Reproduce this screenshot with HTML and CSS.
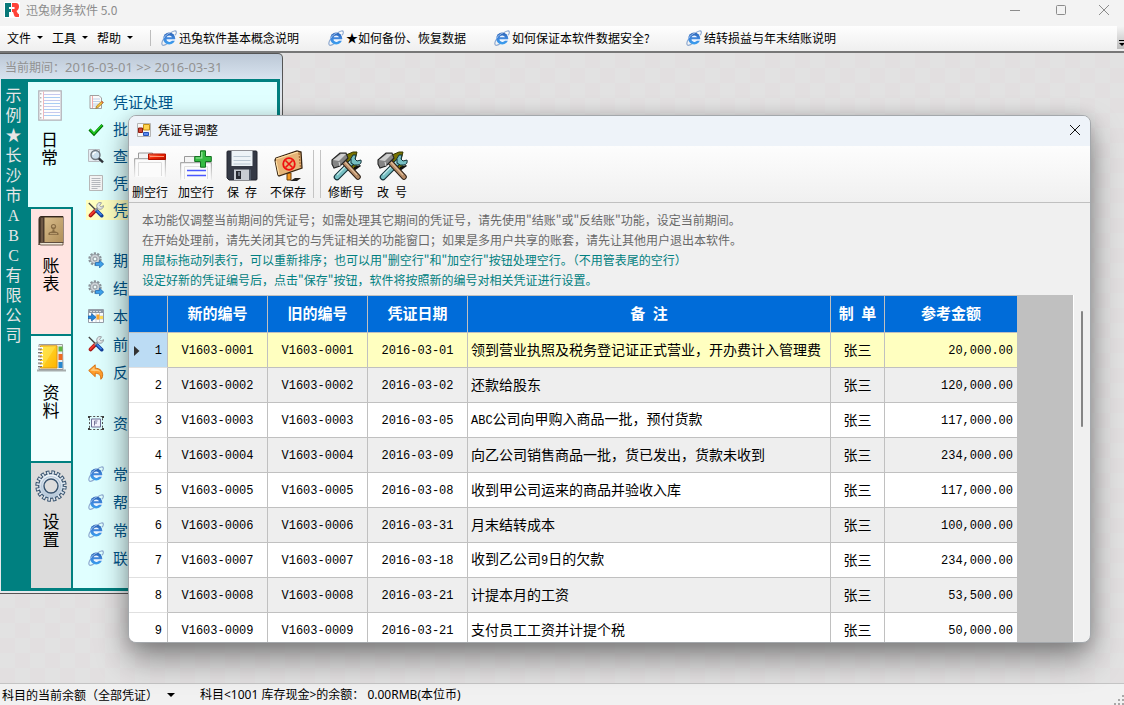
FILE: index.html
```html
<!DOCTYPE html>
<html lang="zh-CN">
<head>
<meta charset="utf-8">
<title>迅兔财务软件 5.0</title>
<meta name="viewport" content="width=device-width, initial-scale=1">
<link rel="stylesheet" href="styles.css">
</head>
<body>
<svg class="sprite" aria-hidden="true">
  <defs>
    <linearGradient id="g-ie" x1="0" y1="0" x2="0" y2="1"><stop offset="0" stop-color="#2a62b4"/><stop offset=".5" stop-color="#3f86dc"/><stop offset="1" stop-color="#3aa0f0"/></linearGradient>
    <linearGradient id="g-leather" x1="0" y1="0" x2="1" y2="1"><stop offset="0" stop-color="#d9bd8b"/><stop offset="1" stop-color="#b08f5a"/></linearGradient>
    <linearGradient id="g-yellow" x1="0" y1="0" x2="1" y2="1"><stop offset="0" stop-color="#ffe23a"/><stop offset="1" stop-color="#ffb400"/></linearGradient>
    <linearGradient id="g-fade" x1="0" y1="0" x2="0" y2="1"><stop offset="0" stop-color="#aaa"/><stop offset="1" stop-color="#eee"/></linearGradient>
    <linearGradient id="g-red" x1="0" y1="0" x2="1" y2="1"><stop offset="0" stop-color="#ff8a66"/><stop offset=".5" stop-color="#ee2200"/><stop offset="1" stop-color="#b01000"/></linearGradient>
    <linearGradient id="g-steel" x1="0" y1="0" x2="0" y2="1"><stop offset="0" stop-color="#f4f8fc"/><stop offset="1" stop-color="#b4c6d8"/></linearGradient>
  </defs>
  <symbol id="i-ie" viewBox="0 0 16 16">
    <path d="M9.500 3C12.500.6 15 .4 15.300 1.800c.2 1-.3 2.300-1 3.400" fill="none" stroke="#8ea9d0" stroke-width="1.100"/>
    <path d="M2.600 9C.6 12 .3 14.500 1.700 15.200c1.100.4 2.800-.4 4.600-1.700" fill="none" stroke="#8ea9d0" stroke-width="1.200"/>
    <circle cx="8.200" cy="8.400" r="6" fill="url(#g-ie)"/>
    <path d="M5.500 7.200a2.900 2.500 0 0 1 5.500 0z" fill="#eef5ff"/>
    <path d="M5.500 9.300h9v1.500h-3.500a3 2.300 0 0 1-5.500-1.500z" fill="#eef5ff"/>
    <path d="M2.500 8.500C4.300 5.500 6.800 3.500 9.500 2.600" fill="none" stroke="#b4cdf0" stroke-width=".9"/>
  </symbol>
  <symbol id="i-logo" viewBox="0 0 16 16">
    <path d="M0 0h16v16H0z" fill="#fff"/>
    <path d="M1 1h6v4H5v2h2v3H5v5H1z" fill="#087878"/>
    <path d="M8 1h4c2 0 3 1.500 3 3.500S14 8 12.500 9c1 1 1 3 2.500 3v3h-3c-2 0-2-3-3-5H8V7h2.500V5H8z" fill="#ff4338"/>
  </symbol>
  <symbol id="i-form" viewBox="0 0 14 14">
    <path d="M.5 .5h13v13H.5z" fill="#f7f7f7" stroke="#b5b5b5"/>
    <path d="M6.500 1.500h6v5.500h-6z" fill="#ffd451" stroke="#c29016"/>
    <path d="M1.500 5h4v4.500h-4z" fill="#d34836" stroke="#8c1b10"/>
    <path d="M6.500 9.500h5v3h-5z" fill="#5b8bf0" stroke="#2753b8"/>
  </symbol>
  <symbol id="i-write" viewBox="0 0 16 16">
    <path d="M2 1.500h9l2.500 2.500v10.500H2z" fill="#fbfbfb" stroke="#a0a0a0"/>
    <path d="M4.500 2v12" stroke="#f3a8a8"/><path d="M5 5h7M5 7.500h7M5 10h5M5 12h4" stroke="#bcd0e8"/>
    <path d="M13.800 7l1.600 1.600-5.400 5-2.200.8.700-2.300z" fill="#f5c238" stroke="#936b24" stroke-width=".7"/>
    <path d="M13.800 7l1.600 1.600-.8.800L13 7.800z" fill="#d0604a"/>
  </symbol>
  <symbol id="i-check" viewBox="0 0 16 16">
    <path d="M1.500 8.500l4.500 4.800L14.500 4" fill="none" stroke="#006f00" stroke-width="2.800"/>
    <path d="M1.800 8.200l4.200 4.300L14 4" fill="none" stroke="#22cf22" stroke-width="1.300"/>
  </symbol>
  <symbol id="i-search" viewBox="0 0 16 16">
    <path d="M.5 1.500h11v12H.5z" fill="#e7edf3" stroke="#b9bdc2"/>
    <circle cx="7.500" cy="7" r="4.500" fill="#cde0ee" stroke="#70777f" stroke-width="1.400"/>
    <path d="M5 7a2.500 2.500 0 0 1 3-2.600" fill="none" stroke="#fff" stroke-width="1.200"/>
    <path d="M10.800 10.300l4.200 4" stroke="#30343a" stroke-width="2.400"/>
  </symbol>
  <symbol id="i-doc" viewBox="0 0 16 16">
    <path d="M1.500 .5h13v15h-13z" fill="#f4f4f4" stroke="#b8b8b8"/>
    <path d="M3.500 3.500h9M3.500 5.500h9M3.500 7.500h9M3.500 9.500h9M3.500 11.500h9M3.500 13.500h6" stroke="#b6b9be"/>
  </symbol>
  <symbol id="i-tools" viewBox="0 0 16 16">
    <path d="M.8 1l6.500 6.500" stroke="#444" stroke-width="1.300"/>
    <path d="M7.300 8.700L2.600 13.400" stroke="#a51212" stroke-width="3.800" stroke-linecap="round"/>
    <path d="M7 8.500L2.400 13" stroke="#f03a2e" stroke-width="1.800" stroke-linecap="round"/>
    <path d="M8.700 8.700l5 5" stroke="#123f99" stroke-width="3.600" stroke-linecap="round"/>
    <path d="M9 8.600l4.500 4.500" stroke="#3d86ec" stroke-width="1.600"/>
    <path d="M6.800 8.800L11 4.600" stroke="#8b9096" stroke-width="2"/>
    <path d="M13.500 .8a3.400 3.400 0 1 0 2 2.800L13.200 5 11.700 3.500z" fill="#e6e9ec" stroke="#8b9096" stroke-width=".8"/>
  </symbol>
  <symbol id="i-gear" viewBox="0 0 16 16">
    <circle cx="7" cy="7" r="5.600" fill="none" stroke="#8c949b" stroke-width="2.200" stroke-dasharray="2.200 1.300"/>
    <circle cx="7" cy="7" r="4.700" fill="#cbd0d5" stroke="#8c949b" stroke-width=".8"/>
    <circle cx="7" cy="7" r="2" fill="#eefcfc" stroke="#8c949b"/>
    <path d="M7.500 10.500h4V8.300l4.200 3.800-4.200 3.800v-2.300h-4z" fill="#3ea2ec" stroke="#1d66b0" stroke-width=".7"/>
  </symbol>
  <symbol id="i-calendar" viewBox="0 0 16 16">
    <path d="M.5 1.500h15v13H.5z" fill="#fff" stroke="#98a0aa"/><path d="M1 2h14v3H1z" fill="#8f9aa6"/>
    <path d="M2 3.500h12" stroke="#d9dde2" stroke-dasharray="2 1"/>
    <path d="M1 8h14M1 11h14M4.500 5v9M8 5v9M11.500 5v9" stroke="#c9d2dd"/>
    <path d="M8.500 6.500h3v5h-3z" fill="#ffa629"/><path d="M12 8h3v3h-3z" fill="#ffdc56"/>
    <path d="M0 8h3.500V5.500L8 9.300 3.500 13v-2.500H0z" fill="#2386dc" stroke="#14549c" stroke-width=".6"/>
  </symbol>
  <symbol id="i-undo" viewBox="0 0 16 16">
    <path d="M.7 6.500L7.200 .8v3.400c5 0 8.300 3.500 7.300 8.300-.2 1.400-.9 2.300-1.700 2.800.2-4-1.600-6-5.600-6v3.400z" fill="#ff9d2b" stroke="#d56b08" stroke-width=".9"/>
    <path d="M2.300 6.500L6.500 2.800v2.400c3 0 5 .9 6 2.600-2-1-4-1-6-.6z" fill="#ffca78"/>
  </symbol>
  <symbol id="i-asset" viewBox="0 0 16 16">
    <path d="M1.500 1.500h13v13h-13z" fill="none" stroke="#505050" stroke-dasharray="2 1.700"/>
    <path d="M3.500 4h9v8h-9z" fill="#f3f4ff" stroke="#6c6c94"/>
    <path d="M6.500 10.500V6H9.500M6.500 8H9" fill="none" stroke="#77779a"/>
    <path d="M0 1h2v2H0zM14 1h2v2h-2zM0 13h2v2H0zM14 13h2v2h-2z" fill="#404040"/>
  </symbol>
  <symbol id="i-page" viewBox="0 0 24 32">
    <path d="M.8 .8h22.400v29.400H.8z" fill="#fdfdfd" stroke="#b1b1b8" stroke-width="1.300"/>
    <path d="M5.500 1.500v28" stroke="#eeb7bd"/>
    <path d="M2.800 3v26" stroke="#999" stroke-dasharray="1.500 2.500"/>
    <path d="M6 4.500h16M6 10.500h16M6 16.500h16M6 22.500h16" stroke="#c5c9ee"/>
    <path d="M6 7.500h16M6 13.500h16M6 19.500h16M6 25.500h16" stroke="#a9cdf3"/>
  </symbol>
  <symbol id="i-book" viewBox="0 0 26 30">
    <path d="M1 3Q1 .5 3 .5h22v26.500H4Q1 27 1 29z" fill="#4b3a2c" stroke="#35281d"/>
    <path d="M6.500 1.500h18.500V26H6.500z" fill="url(#g-leather)"/>
    <path d="M1.500 27.500Q2 26.500 4 26.500h21v2.500H3Q1.500 29 1.500 27.500z" fill="#eee7d8" stroke="#513e2d" stroke-width=".8"/>
    <path d="M4 2v24" stroke="#6e5845" stroke-width="2"/>
    <circle cx="15.500" cy="10.500" r="2.600" fill="#876b43"/><circle cx="15.500" cy="10.300" r="1.300" fill="#c5a778"/>
    <path d="M10.500 19v-2q1-1.200 4-1.700v-2h2v2q3 .5 4 1.700v2z" fill="#876b43"/><path d="M12 17.700h7" stroke="#c5a778"/>
  </symbol>
  <symbol id="i-notes" viewBox="0 0 30 30">
    <path d="M1 27.500h29" stroke="#777" stroke-width="2" opacity=".6"/>
    <path d="M3 1.500h23.500l.5 25H3z" fill="#eee" stroke="#9c9c9c"/>
    <path d="M22.500 3.500h4v5h-4z" fill="#62b743"/><path d="M22.500 11h4v6h-4z" fill="#ef6b22"/><path d="M22.500 19h4v6h-4z" fill="#2788cf"/>
    <path d="M4.500 2.800h16.500v22.200h-16.500z" fill="url(#g-yellow)" stroke="#dc9610"/>
    <path d="M6 25V4l14-1z" fill="#ffed64" opacity=".45"/>
    <path d="M2 5h5M2 8.500h5M2 12h5M2 15.500h5M2 19h5M2 22.500h5" stroke="#fff" stroke-width="2"/>
    <path d="M2 6h4M2 9.500h4M2 13h4M2 16.500h4M2 20h4M2 23.500h4" stroke="#777"/>
  </symbol>
  <symbol id="i-cog" viewBox="0 0 32 32">
    <circle cx="16" cy="16" r="13.500" fill="none" stroke="#38536f" stroke-width="4.400" stroke-dasharray="3.400 1.900"/>
    <circle cx="16" cy="16" r="12.300" fill="url(#g-steel)" stroke="#38536f" stroke-width="1.200"/>
    <circle cx="16" cy="16" r="13" fill="none" stroke="#dfe8f1" stroke-width="3.400" stroke-dasharray="1.600 3.504" stroke-dashoffset="-.9"/>
    <circle cx="16" cy="16" r="9.500" fill="none" stroke="#b9cada" stroke-width="1.200"/>
    <circle cx="16" cy="16" r="7" fill="#dcdcdc" stroke="#38536f" stroke-width="1.400"/>
  </symbol>
  <symbol id="i-delrow" viewBox="0 0 32 32">
    <path d="M4.500 9V3h14v6" fill="#f4f4f4" stroke="#9a9a9a"/>
    <path d="M.5 27V9.500q0-.9 1-.9h29q1 0 1 .9V27" fill="#fbfbfb" stroke="url(#g-fade)" stroke-width="1.400"/>
    <path d="M4.500 26V12.500h23V26" fill="none" stroke="#dedede"/>
    <path d="M14.500 4h17v5.500h-17z" fill="url(#g-red)" stroke="#b21000"/><path d="M16 6.500h14" stroke="#ff9a7a"/>
  </symbol>
  <symbol id="i-addrow" viewBox="0 0 32 32">
    <path d="M4.500 13V6.500h15V13" fill="#f4f4f4" stroke="#9a9a9a"/>
    <path d="M.5 30V13.500q0-.9 1-.9h29q1 0 1 .9V30" fill="#fbfbfb" stroke="url(#g-fade)" stroke-width="1.400"/>
    <path d="M4.500 29V16.500h23V29" fill="none" stroke="#dedede"/>
    <path d="M7 20.500h19M7 25.500h19" stroke="#4a57ff" stroke-width="1.400"/>
    <path d="M20.500 .8h5v5.700h5.800v5h-5.800v5.700h-5v-5.700h-5.800v-5h5.800z" fill="#35bb43" stroke="#157222"/>
    <path d="M21.800 2v6h-6" fill="none" stroke="#9be8a0" stroke-width="1.200"/>
  </symbol>
  <symbol id="i-save" viewBox="0 0 32 32">
    <path d="M2 1h28q1 0 1 1v27q0 1-1 1H3l-2-2V2q0-1 1-1z" fill="#343945" stroke="#22252e"/>
    <path d="M5.500 1h21v15h-21z" fill="#edf3f7"/><path d="M7.500 6.500h17M7.500 10.500h17M7.500 14h17" stroke="#b9c7d2"/>
    <path d="M8 19.500h15V30H8z" fill="#c8cdd3"/><path d="M10 21h5v8h-5z" fill="#272a31"/><path d="M12 22h2v4h-2z" fill="#6e7580"/>
    <path d="M23 19.500h2V30h-2z" fill="#4e5664"/>
  </symbol>
  <symbol id="i-nosave" viewBox="0 0 32 32">
    <path d="M18 31l5-3h6l-4 3z" fill="#222"/>
    <path d="M15 23h4v7h-4z" fill="#f59a20" stroke="#70400a"/>
    <path d="M4 8l21-7 4 1 1 16-23 8-1-1-3-15z" fill="#e6b477" stroke="#392511" stroke-width="1.300"/>
    <path d="M4 9l22-7M4 11l3 14" stroke="#ffe1a6" stroke-width="1.200"/>
    <path d="M27 3l1.500 15" stroke="#a96c34" stroke-width="1.200" stroke-dasharray="2 1"/>
    <circle cx="17" cy="14" r="5.800" fill="none" stroke="#f01010" stroke-width="1.800"/>
    <path d="M13.500 10.500l7 7M20.500 10.500l-7 7" stroke="#f01010" stroke-width="1.600"/>
  </symbol>
  <symbol id="i-hammer" viewBox="0 0 32 32">
    <path d="M16 5l7-3h4l-2 8 2 6-4 3-5 1z" fill="#777200" stroke="#363600"/>
    <path d="M24 17l6-2 1 1-7 5z" fill="#111"/>
    <path d="M7 27L22 12" stroke="#123038" stroke-width="6.600" stroke-linecap="round"/>
    <path d="M7 27L23 11" stroke="#76bfc3" stroke-width="4.400" stroke-linecap="round"/>
    <path d="M7 25L21 11" stroke="#c0e8ea" stroke-width="1.200"/>
    <path d="M26 5l-1 4 2 2 4-1q1 4-3 5-4 1-7-2-1-5 2-8z" fill="#76bfc3" stroke="#123038"/>
    <path d="M14 12l14 15" stroke="#2d2016" stroke-width="5.600" stroke-linecap="round"/>
    <path d="M14 12l14 15" stroke="#b68b67" stroke-width="3.600" stroke-linecap="round"/>
    <path d="M15 12l12 13" stroke="#e0bd98" stroke-width="1.200"/>
    <path d="M2 10l8-7 6 0 2 5-8 8-6 2-2-4z" fill="#858585" stroke="#242424" stroke-width="1.100"/>
    <path d="M3 10l8-6 5 0-7 7z" fill="#cfcfcf"/><path d="M9 12l1 4" stroke="#ddd"/>
  </symbol>
</svg>

<div class="app">
  <header class="titlebar">
    <svg class="logo" aria-hidden="true"><use href="#i-logo"/></svg>
    <h1 class="app-name">迅兔财务软件 5.0</h1>
    <div class="window-controls">
      <button class="win-btn" type="button" aria-label="最小化"><svg viewBox="0 0 10 10"><path d="M0 5.500h10"/></svg></button>
      <button class="win-btn" type="button" aria-label="最大化"><svg viewBox="0 0 10 10"><rect x=".5" y=".5" width="9" height="9" rx="1"/></svg></button>
      <button class="win-btn" type="button" aria-label="关闭"><svg viewBox="0 0 10 10"><path d="M0 0l10 10M10 0L0 10"/></svg></button>
    </div>
  </header>

  <nav class="menubar">
    <div class="menus">
      <button class="menu" type="button">文件<i class="caret"></i></button>
      <button class="menu" type="button">工具<i class="caret"></i></button>
      <button class="menu" type="button">帮助<i class="caret"></i></button>
    </div>
    <div class="help-links">
      <a class="help-link" href="#"><svg class="icon"><use href="#i-ie"/></svg>迅兔软件基本概念说明</a>
      <a class="help-link" href="#"><svg class="icon"><use href="#i-ie"/></svg>★如何备份、恢复数据</a>
      <a class="help-link" href="#"><svg class="icon"><use href="#i-ie"/></svg>如何保证本软件数据安全?</a>
      <a class="help-link" href="#"><svg class="icon"><use href="#i-ie"/></svg>结转损益与年末结账说明</a>
    </div>
    <button class="overflow" type="button" aria-label="更多"><svg viewBox="0 0 7 7"><path d="M2 .5h5" stroke="#000"/><path d="M2 3h6L5 6z"/></svg></button>
  </nav>

  <main class="workspace">
    <section class="panel">
      <div class="period">当前期间：<span class="dates">2016-03-01 &gt;&gt; 2016-03-31</span></div>
      <div class="panel-body">
        <div class="company">示例★长沙市ABC有限公司</div>
        <div class="tabs">
          <button class="tab tab-active" type="button"><svg class="tab-icon"><use href="#i-page"/></svg><span class="tab-label">日常</span></button>
          <button class="tab tab-books" type="button"><svg class="tab-icon"><use href="#i-book"/></svg><span class="tab-label">账表</span></button>
          <button class="tab tab-data" type="button"><svg class="tab-icon"><use href="#i-notes"/></svg><span class="tab-label">资料</span></button>
          <button class="tab tab-setup" type="button"><svg class="tab-icon"><use href="#i-cog"/></svg><span class="tab-label">设置</span></button>
        </div>
        <div class="commands">
          <div class="group group-tight">
            <a class="command" href="#"><svg class="icon"><use href="#i-write"/></svg>凭证处理</a>
            <a class="command" href="#"><svg class="icon"><use href="#i-check"/></svg>批</a>
            <a class="command" href="#"><svg class="icon"><use href="#i-search"/></svg>查</a>
            <a class="command" href="#"><svg class="icon"><use href="#i-doc"/></svg>凭</a>
            <a class="command command-current" href="#"><svg class="icon"><use href="#i-tools"/></svg>凭</a>
          </div>
          <div class="group">
            <a class="command" href="#"><svg class="icon"><use href="#i-gear"/></svg>期</a>
            <a class="command" href="#"><svg class="icon"><use href="#i-gear"/></svg>结</a>
            <a class="command" href="#"><svg class="icon"><use href="#i-calendar"/></svg>本</a>
            <a class="command" href="#"><svg class="icon"><use href="#i-tools"/></svg>前</a>
            <a class="command" href="#"><svg class="icon"><use href="#i-undo"/></svg>反</a>
          </div>
          <div class="group">
            <a class="command" href="#"><svg class="icon"><use href="#i-asset"/></svg>资</a>
          </div>
          <div class="group">
            <a class="command" href="#"><svg class="icon"><use href="#i-ie"/></svg>常</a>
            <a class="command" href="#"><svg class="icon"><use href="#i-ie"/></svg>帮</a>
            <a class="command" href="#"><svg class="icon"><use href="#i-ie"/></svg>常</a>
            <a class="command" href="#"><svg class="icon"><use href="#i-ie"/></svg>联</a>
          </div>
        </div>
      </div>
    </section>
  </main>

  <footer class="statusbar">
    <button class="scope" type="button">科目的当前余额（全部凭证）<i class="caret caret-lg"></i></button>
    <span class="balance">科目&lt;1001 库存现金&gt;的余额：&nbsp;0.00RMB(本位币)</span>
    <svg class="grip" viewBox="0 0 10 10" aria-hidden="true"><path d="M8 0h2v2H8zM4 4h2v2H4zM8 4h2v2H8zM0 8h2v2H0zM4 8h2v2H4zM8 8h2v2H8z"/></svg>
  </footer>
</div>

<section class="dialog" role="dialog" aria-labelledby="dialog-title">
  <header class="dialog-title">
    <svg class="form-icon" aria-hidden="true"><use href="#i-form"/></svg>
    <h2 class="dialog-name" id="dialog-title">凭证号调整</h2>
    <button class="dialog-close" type="button" aria-label="关闭"><svg viewBox="0 0 10 10"><path d="M0 0l10 10M10 0L0 10"/></svg></button>
  </header>
  <div class="toolbar">
    <button class="tool" type="button"><svg class="tool-icon"><use href="#i-delrow"/></svg>删空行</button>
    <button class="tool" type="button"><svg class="tool-icon"><use href="#i-addrow"/></svg>加空行</button>
    <button class="tool" type="button"><svg class="tool-icon"><use href="#i-save"/></svg>保&ensp;存</button>
    <button class="tool" type="button"><svg class="tool-icon"><use href="#i-nosave"/></svg>不保存</button>
    <span class="tool-sep"></span>
    <button class="tool" type="button"><svg class="tool-icon"><use href="#i-hammer"/></svg>修断号</button>
    <button class="tool" type="button"><svg class="tool-icon"><use href="#i-hammer"/></svg>改&ensp;号</button>
  </div>
  <div class="notes">
    <p>本功能仅调整当前期间的凭证号；如需处理其它期间的凭证号，请先使用"结账"或"反结账"功能，设定当前期间。</p>
    <p>在开始处理前，请先关闭其它的与凭证相关的功能窗口；如果是多用户共享的账套，请先让其他用户退出本软件。</p>
    <p class="tip">用鼠标拖动列表行，可以重新排序；也可以用"删空行"和"加空行"按钮处理空行。（不用管表尾的空行）</p>
    <p class="tip">设定好新的凭证编号后，点击"保存"按钮，软件将按照新的编号对相关凭证进行设置。</p>
  </div>
  <div class="grid-area">
    <div class="grid-view">
      <table class="vouchers">
        <colgroup><col class="c-row"><col class="c-code"><col class="c-code"><col class="c-code"><col><col class="c-maker"><col class="c-sum"></colgroup>
        <thead>
          <tr><th></th><th>新的编号</th><th>旧的编号</th><th>凭证日期</th><th>备&ensp;注</th><th>制&ensp;单</th><th>参考金额</th></tr>
        </thead>
        <tbody>
          <tr class="selected"><th scope="row"><span class="row-head"><svg class="marker" viewBox="0 0 6 10"><path d="M0 0l5.500 5L0 10z"/></svg>1</span></th><td class="code">V1603-0001</td><td class="code">V1603-0001</td><td class="code">2016-03-01</td><td>领到营业执照及税务登记证正式营业，开办费计入管理费</td><td class="maker">张三</td><td class="sum">20,000.00</td></tr>
          <tr><th scope="row">2</th><td class="code">V1603-0002</td><td class="code">V1603-0002</td><td class="code">2016-03-02</td><td>还款给股东</td><td class="maker">张三</td><td class="sum">120,000.00</td></tr>
          <tr><th scope="row">3</th><td class="code">V1603-0003</td><td class="code">V1603-0003</td><td class="code">2016-03-05</td><td><span class="latin">ABC</span>公司向甲购入商品一批，预付货款</td><td class="maker">张三</td><td class="sum">117,000.00</td></tr>
          <tr><th scope="row">4</th><td class="code">V1603-0004</td><td class="code">V1603-0004</td><td class="code">2016-03-09</td><td>向乙公司销售商品一批，货已发出，货款未收到</td><td class="maker">张三</td><td class="sum">234,000.00</td></tr>
          <tr><th scope="row">5</th><td class="code">V1603-0005</td><td class="code">V1603-0005</td><td class="code">2016-03-08</td><td>收到甲公司运来的商品并验收入库</td><td class="maker">张三</td><td class="sum">117,000.00</td></tr>
          <tr><th scope="row">6</th><td class="code">V1603-0006</td><td class="code">V1603-0006</td><td class="code">2016-03-31</td><td>月末结转成本</td><td class="maker">张三</td><td class="sum">100,000.00</td></tr>
          <tr><th scope="row">7</th><td class="code">V1603-0007</td><td class="code">V1603-0007</td><td class="code">2016-03-18</td><td>收到乙公司<span class="latin">9</span>日的欠款</td><td class="maker">张三</td><td class="sum">234,000.00</td></tr>
          <tr><th scope="row">8</th><td class="code">V1603-0008</td><td class="code">V1603-0008</td><td class="code">2016-03-21</td><td>计提本月的工资</td><td class="maker">张三</td><td class="sum">53,500.00</td></tr>
          <tr><th scope="row">9</th><td class="code">V1603-0009</td><td class="code">V1603-0009</td><td class="code">2016-03-21</td><td>支付员工工资并计提个税</td><td class="maker">张三</td><td class="sum">50,000.00</td></tr>
        </tbody>
      </table>
    </div>
    <div class="scroll-track"><div class="scroll-thumb"></div></div>
  </div>
</section>
</body>
</html>
```

FILE: styles.css
```css
* { box-sizing: border-box; }

body {
  margin: 0;
  font: 12px/16px "Noto Sans CJK SC", sans-serif;
  color: #000;
}

h1, h2, p { margin: 0; font-size: 12px; font-weight: 400; }
a { color: inherit; text-decoration: none; }
svg { display: block; flex: none; }
button {
  margin: 0;
  padding: 0;
  border: 0;
  background: none;
  color: inherit;
  font: inherit;
}

.sprite { position: absolute; width: 0; height: 0; }
.icon { width: 16px; height: 16px; }

.app {
  position: relative;
  display: flex;
  flex-direction: column;
  height: 100vh;
  overflow: hidden;
}

/* Title bar */
.titlebar {
  display: flex;
  align-items: center;
  height: 26px;
  padding: 0 0 6px 4px;
  background: #f3f3f3;
}
.logo { width: 16px; height: 16px; }
.app-name { flex: 1; margin-left: 6px; color: #8c8c8c; }
.window-controls { display: flex; }
.win-btn {
  display: flex;
  align-items: center;
  justify-content: center;
  width: 46px;
  height: 20px;
}
.win-btn:last-child { width: 40px; }
.win-btn svg, .dialog-close svg {
  width: 10px;
  height: 10px;
  overflow: visible;
  fill: none;
  stroke: #8c8c8c;
}

/* Menu bar */
.menubar {
  display: flex;
  align-items: center;
  height: 27px;
  padding: 0 0 2px 7px;
  border-bottom: 2px solid #777;
  background: linear-gradient(#fefefe, #efefef);
}
.menus {
  display: flex;
  gap: 9px;
  width: 144px;
  border-right: 1px solid #bdbdbd;
}
.menu { display: flex; align-items: center; gap: 6px; }
.caret {
  width: 6px;
  border: 3px solid transparent;
  border-top-color: #000;
  border-bottom: 0;
}
.caret-lg { width: 8px; border-width: 4px 4px 0; }
.help-links {
  flex: 1;
  display: grid;
  grid-template-columns: 167px 166px 192px auto;
  margin-left: 10px;
}
.help-link { display: flex; gap: 2px; white-space: nowrap; }
.overflow {
  display: flex;
  align-items: flex-end;
  width: 7px;
  height: 23px;
  padding-bottom: 2px;
  background: linear-gradient(#f4f4f4, #bdbdbd);
}
.overflow svg { width: 7px; height: 7px; }

/* Workspace */
.workspace {
  flex: 1;
  min-height: 0;
  background: conic-gradient(#e2dfe0 25%, #e2e2e2 0 50%, #e2dfe0 0 75%, #e2e2e2 0) 0 0 / 30px 30px;
}
.panel {
  width: 283px;
  padding: 0 2px 2px 1px;
  border: 1px solid #555;
  border-left: 0;
  border-radius: 0 5px 0 0;
  background: linear-gradient(#bcc8d6, #d9e4f0 26px, #e6e9ec 50px);
}
.period {
  height: 25px;
  padding: 5px 4px;
  color: #929292;
}
.dates { font: 13px/16px "Noto Sans", sans-serif; }
.panel-body {
  display: flex;
  border: solid #008080;
  border-width: 3px 3px 3px 0;
  background: #e0ffff;
}
.company {
  width: 27px;
  padding: 4px 6px 4px 4px;
  background: #008080;
  color: #e6e6e6;
  font-family: "Liberation Serif", "Noto Sans CJK SC", serif;
  font-size: 16px;
  line-height: 20px;
  text-align: center;
  word-break: break-all;
}
.tabs { display: flex; flex-direction: column; width: 45px; }
.tab {
  display: flex;
  flex-direction: column;
  align-items: center;
  gap: 10px;
  height: 127px;
  padding: 7px 0;
  border: solid #008080;
  border-width: 2px 2px 0 3px;
}
.tab-active { gap: 8px; height: 125px; padding: 8px 2px 0 0; border: 0; }
.tab-books { background: #ffe4e1; }
.tab-data { background: #f0ffff; }
.tab-setup { background: #dcdcdc; }
.tab-icon { width: 32px; height: 32px; }
.tab-books .tab-icon, .tab-data .tab-icon { height: 30px; }
.tab-label { width: 18px; font-size: 17px; line-height: 18px; word-break: break-all; }

.commands {
  flex: 1;
  display: flex;
  flex-direction: column;
  gap: 23px;
  padding: 6px 0 0 13px;
}
.group { display: flex; flex-direction: column; }
.command {
  display: flex;
  align-items: center;
  gap: 9px;
  height: 20px;
  margin: 4px 0;
  padding-left: 2px;
  color: #00558a;
  font-size: 15px;
}
.group-tight .command { margin: 4px 0 3px; }
.command-current { background: #ffffc0; }

/* Status bar */
.statusbar {
  display: flex;
  align-items: center;
  height: 22px;
  padding-left: 2px;
  border-top: 1px solid #c4c4c4;
  background: #f1f1f1;
}
.scope { display: flex; align-items: center; gap: 9px; width: 198px; white-space: nowrap; }
.balance { flex: 1; font-family: "Noto Sans", "Noto Sans CJK SC", sans-serif; white-space: nowrap; }
.grip { align-self: flex-end; width: 10px; height: 10px; fill: #a8a8a8; }

/* Dialog floating over the main window */
.dialog {
  position: absolute;
  inset: 115px 33px 62px 128px;
  display: flex;
  flex-direction: column;
  overflow: hidden;
  border: 1px solid #a4a8ac;
  border-radius: 8px;
  background: #f0f0f0;
  box-shadow: 0 16px 32px rgba(0, 0, 0, .4), 0 2px 16px rgba(0, 0, 0, .14);
}
.dialog-title {
  display: flex;
  align-items: center;
  flex: none;
  height: 30px;
  padding: 0 10px 2px 8px;
  background: #eef3f9;
}
.form-icon { width: 14px; height: 14px; }
.dialog-name { flex: 1; margin-left: 7px; }
.dialog-close { display: flex; padding: 0; }
.dialog-close svg { stroke: #111; }

.toolbar {
  display: flex;
  gap: 4px;
  flex: none;
  height: 57px;
  padding-top: 4px;
  border-bottom: 1px solid #c0c0c0;
  background: linear-gradient(#fdfdfd, #f0f0f0);
}
.tool {
  display: flex;
  flex-direction: column;
  align-items: center;
  gap: 2px;
  width: 42px;
  height: 50px;
  white-space: nowrap;
}
.tool-icon { width: 32px; height: 32px; }
.tool-sep {
  width: 8px;
  height: 48px;
  border: solid #c4c4c4;
  border-width: 0 1px;
}

.notes {
  flex: none;
  padding: 7px 13px 5px;
  color: #696969;
}
.notes p { line-height: 20px; }
.notes .tip { color: #008080; }

/* Voucher grid */
.grid-area { flex: 1; display: flex; min-height: 0; }
.grid-view {
  flex: 1;
  overflow: hidden;
  padding-right: 56px;
  border-top: 1px solid #c0c0c0;
  background: #c0c0c0;
}
.vouchers {
  width: 100%;
  table-layout: fixed;
  border-spacing: 0;
  font-size: 14px;
  line-height: 20px;
}
.c-row { width: 39px; }
.c-code { width: 100px; }
.c-maker { width: 54px; }
.c-sum { width: 132px; }
.vouchers th, .vouchers td {
  height: 35px;
  padding: 0 3px 2px;
  border: solid #c0c0c0;
  border-width: 0 1px 1px 0;
  background: #fff;
  white-space: nowrap;
}
.vouchers tr > :last-child { border-right: 0; }
.vouchers thead th {
  height: 37px;
  background: #006cd9;
  color: #fff;
  font-size: 15px;
  font-weight: 700;
}
.vouchers tbody tr:nth-child(even) td { background: #eee; }
.vouchers tbody th {
  padding: 2px 5px 0;
  border-bottom-color: #e0e0e0;
  font: 12px/20px "Liberation Mono", monospace;
  text-align: right;
}
.vouchers .selected td { background: #ffffc0; }
.vouchers .selected th { background: #bcdcf4; }
.row-head { display: flex; align-items: center; justify-content: space-between; }
.marker { width: 6px; height: 10px; fill: #333; }
.vouchers .code, .vouchers .sum {
  padding-top: 2px;
  padding-bottom: 0;
  font: 12px/20px "Liberation Mono", monospace;
}
.vouchers .code, .vouchers .maker { text-align: center; }
.vouchers .sum { padding-right: 4px; text-align: right; }
.latin { font-family: "Liberation Mono", monospace; font-size: 12px; }

.scroll-track {
  width: 17px;
  padding: 16px 0 0 7px;
  border-left: 1px solid #fff;
}
.scroll-thumb { width: 2px; height: 116px; border-radius: 1px; background: #858585; }
```
